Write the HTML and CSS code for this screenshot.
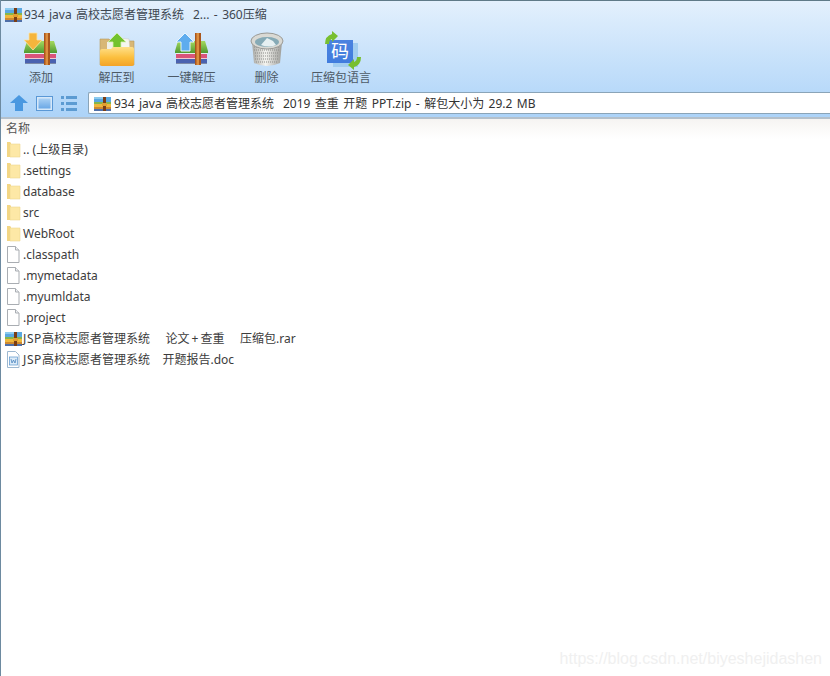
FILE: index.html
```html
<!DOCTYPE html>
<html lang="zh-CN">
<head>
  <meta charset="UTF-8" />
  <title>360压缩</title>
  <link rel="stylesheet" href="styles.css">
</head>
<body>
  <svg class="defs" width="0" height="0">
    <defs>
      <g id="rar">
        <rect x="1" y="2" width="17" height="5" fill="#5aa8e0"/>
        <rect x="1" y="2" width="9" height="2" fill="#8ccbef"/>
        <rect x="1" y="7" width="17" height="2" fill="#86b64c"/>
        <rect x="1" y="9" width="17" height="3" fill="#f0b83c"/>
        <rect x="1" y="12" width="17" height="2" fill="#cf8a30"/>
        <rect x="1" y="14" width="17" height="2" fill="#4f6fa8"/>
        <rect x="10" y="2" width="3" height="14" fill="#7a3d14"/>
        <rect x="9" y="8" width="5" height="3" fill="#e0a030"/>
      </g>
      <g id="folder">
        <path d="M0 1h3l1 1v14H0z" fill="#f3d684"/>
        <path d="M3 3h10v13H3z" fill="#fde8a6" stroke="#efd690" stroke-width=".6"/>
      </g>
      <g id="file">
        <path d="M.5.500h8l3.500 3.500v12.500H.5z" fill="#fff" stroke="#a9adb2"/>
        <path d="M8.500.5v3.500h3.500" fill="#eef0f2" stroke="#a9adb2"/>
      </g>
      <linearGradient id="lid" x1="0" y1="0" x2="0" y2="1">
        <stop offset="0" stop-color="#a6d95e"/>
        <stop offset="1" stop-color="#4f9a32"/>
      </linearGradient>
      <linearGradient id="fold" x1="0" y1="0" x2="0" y2="1">
        <stop offset="0" stop-color="#ffe08a"/>
        <stop offset=".55" stop-color="#fbbf3e"/>
        <stop offset="1" stop-color="#f3a328"/>
      </linearGradient>
      <linearGradient id="bin" x1="0" y1="0" x2="1" y2="0">
        <stop offset="0" stop-color="#a8a8a4"/>
        <stop offset=".45" stop-color="#f4f4f0"/>
        <stop offset="1" stop-color="#9c9c98"/>
      </linearGradient>
      <linearGradient id="square" x1="0" y1="0" x2="0" y2="1">
        <stop offset="0" stop-color="#a9d0f4"/>
        <stop offset="1" stop-color="#6ba8e6"/>
      </linearGradient>
      <g id="archive">
        <path d="M4 9h27l3 10v2H1v-2z" fill="url(#lid)"/>
        <rect x="2" y="21" width="31" height="1" fill="#e8eef0"/>
        <rect x="2" y="22" width="31" height="4" fill="#d9547a"/>
        <rect x="2" y="26" width="31" height="1" fill="#f0c8d0"/>
        <rect x="2" y="27" width="31" height="4" fill="#4a62b0"/>
        <rect x="2" y="31" width="31" height="1" fill="#7c8aa8"/>
        <path d="M21 1h6v32h-6z" fill="#a9561c"/>
        <path d="M22.500 1h2.500v32h-2.500z" fill="#dc8e3e"/>
      </g>
    </defs>
  </svg>

  <div class="window">
    <header class="top">
      <div class="titlebar">
        <svg width="18" height="17" viewBox="0 0 18 17"><use href="#rar"/></svg>
        <span class="spaced">934 java 高校志愿者管理系统  2... - 360压缩</span>
      </div>

      <div class="tools">
        <div class="tool tool-add">
          <svg width="36" height="36" viewBox="0 0 36 36">
            <use href="#archive"/>
            <path d="M6 1h8v7h5l-9 10L1 8h5z" fill="#f5b53c" stroke="#fbe3a6" stroke-width=".8"/>
          </svg>
          <span>添加</span>
        </div>
        <div class="tool tool-extract">
          <svg width="36" height="36" viewBox="0 0 36 36">
            <path d="M1 7h9l2 2h23v24H1z" fill="#d8b776" stroke="#b99a5c" stroke-width=".6"/>
            <path d="M18 6l12 1 1 12H18z" fill="#f6f6f0" stroke="#c8c8c0" stroke-width=".5"/>
            <path d="M8 10l10-1v9H8z" fill="#f0f0e8"/>
            <path d="M18 1l9 9h-5v8h-8v-8H9z" fill="#72c22e" stroke="#d8f0b4" stroke-width=".8"/>
            <path d="M1 19q0-2 2-2h9l2-2h19q2 0 2 2v15q0 2-2 2H3q-2 0-2-2z" fill="url(#fold)"/>
          </svg>
          <span>解压到</span>
        </div>
        <div class="tool tool-one">
          <svg width="36" height="36" viewBox="0 0 36 36">
            <use href="#archive"/>
            <path d="M11 1l9 9h-4v9H7v-9H2z" fill="#5eacee" stroke="#e6f4fe" stroke-width="1"/>
          </svg>
          <span>一键解压</span>
        </div>
        <div class="tool tool-del">
          <svg width="36" height="36" viewBox="0 0 36 36">
            <path d="M3 10l2 21q13 6 26 0l2-21z" fill="url(#bin)"/>
            <path d="M5 15h26M5 18h26M6 21h24M6 24h24M6 27h24M7 30h22" stroke="#8b8b88" stroke-width="1" stroke-dasharray="1 1"/>
            <ellipse cx="18" cy="9" rx="16" ry="8" fill="#d9d9d4" stroke="#9a9a96"/>
            <ellipse cx="18" cy="10" rx="12" ry="5" fill="#86aab6"/>
            <path d="M12 13l6-7 6 3 3 4q-7 3-15 0z" fill="#e6f0f2"/>
          </svg>
          <span>删除</span>
        </div>
        <div class="tool tool-lang">
          <svg width="36" height="36" viewBox="0 0 36 36">
            <rect x="10" y="11" width="25" height="24" fill="#a2cdf0"/>
            <rect x="4" y="8" width="26" height="23" fill="url(#square)"/>
            <rect x="4" y="8" width="26" height="23" fill="#3a74dc" fill-opacity=".85"/>
            <text x="17" y="26" class="ma">码</text>
            <path d="M2 12q0-8 7-10V-1l6 5-6 6V7q-3 1-3 5z" fill="#78bf30"/>
            <path d="M38 25q0 8-7 10v3l-6-5 6-6v3q3-1 3-5z" fill="#78bf30"/>
          </svg>
          <span>压缩包语言</span>
        </div>
      </div>

      <div class="navrow">
        <svg width="18" height="16" viewBox="0 0 18 16"><path d="M9 0l9 8h-5v8H5V8H0z" fill="#4a98e0"/></svg>
        <svg width="17" height="15" viewBox="0 0 17 15"><rect x=".5" y=".5" width="16" height="14" fill="#d6e8f9" stroke="#5a98d6"/><rect x="2.500" y="2.500" width="12" height="10" fill="url(#square)"/></svg>
        <svg width="16" height="15" viewBox="0 0 16 15"><path d="M0 0h3v3H0zM5 0h11v3H5zM0 6h3v3H0zM5 6h11v3H5zM0 12h3v3H0zM5 12h11v3H5z" fill="#5c9bd2"/></svg>
        <div class="pathbox">
          <svg width="18" height="17" viewBox="0 0 18 17"><use href="#rar"/></svg>
          <span class="spaced">934 java 高校志愿者管理系统  2019 查重 开题 PPT.zip - 解包大小为 29.2 MB</span>
        </div>
      </div>
    </header>

    <main class="listing">
      <div class="colhead">名称</div>
      <ul class="files">
        <li><svg width="18" height="17" viewBox="0 0 18 17"><use href="#folder" x="3"/></svg>.. (上级目录)</li>
        <li><svg width="18" height="17" viewBox="0 0 18 17"><use href="#folder" x="3"/></svg>.settings</li>
        <li><svg width="18" height="17" viewBox="0 0 18 17"><use href="#folder" x="3"/></svg>database</li>
        <li><svg width="18" height="17" viewBox="0 0 18 17"><use href="#folder" x="3"/></svg>src</li>
        <li><svg width="18" height="17" viewBox="0 0 18 17"><use href="#folder" x="3"/></svg>WebRoot</li>
        <li><svg width="18" height="17" viewBox="0 0 18 17"><use href="#file" x="3"/></svg>.classpath</li>
        <li><svg width="18" height="17" viewBox="0 0 18 17"><use href="#file" x="3"/></svg>.mymetadata</li>
        <li><svg width="18" height="17" viewBox="0 0 18 17"><use href="#file" x="3"/></svg>.myumldata</li>
        <li><svg width="18" height="17" viewBox="0 0 18 17"><use href="#file" x="3"/></svg>.project</li>
        <li><svg width="18" height="17" viewBox="0 0 18 17"><use href="#rar"/></svg><span><span class="latin">JSP</span>高校志愿者管理系统     论文<span class="plus">+</span>查重     压缩包.rar</span></li>
        <li><svg width="18" height="17" viewBox="0 0 18 17"><path d="M3.500.5h8l3.500 3.500v12.500H3.500z" fill="#fff" stroke="#9db8d0"/><rect x="5.500" y="6" width="8" height="8" fill="#dcebf8" stroke="#5a94cc" stroke-width=".7"/><path d="M7 8l1 4 1.500-3 1.500 3 1-4" fill="none" stroke="#3a78b8" stroke-width=".7"/></svg><span><span class="latin">JSP</span>高校志愿者管理系统    开题报告.doc</span></li>
      </ul>
      <div class="watermark">https://blog.csdn.net/biyeshejidashen</div>
    </main>
  </div>
</body>
</html>
```
FILE: styles.css
```css
* {
  box-sizing: border-box;
  margin: 0;
  padding: 0;
}
html, body {
  height: 100%;
}
body {
  font-family: "Noto Sans", "Noto Sans CJK SC", sans-serif;
  font-size: 12px;
  color: #444;
  background: #fff;
  overflow: hidden;
}
.defs {
  position: absolute;
}
.window {
  height: 676px;
  display: flex;
  flex-direction: column;
  border-left: 1px solid #6d8aa0;
}
.top {
  height: 119px;
  background: linear-gradient(to bottom, #e3f0fd, #acd3f8);
  border-top: 1px solid #5f7a88;
  border-bottom: 2px solid #b4c0cb;
}
.titlebar {
  height: 26px;
  padding-left: 3px;
  display: flex;
  align-items: center;
  gap: 2px;
  color: #3d4650;
}
.spaced {
  white-space: pre;
  word-spacing: 1.3px;
}
.tools {
  display: flex;
  height: 65px;
  padding-top: 5px;
}
.tool {
  display: flex;
  flex-direction: column;
  align-items: center;
  color: #4d5a66;
}
.tool svg {
  overflow: visible;
}
.tool-add { width: 80px; }
.tool-extract { width: 71px; }
.tool-one { width: 79px; }
.tool-del { width: 71px; }
.tool-lang { width: 78px; }
.ma {
  font-size: 18px;
  fill: #fff;
  text-anchor: middle;
  font-family: "Noto Sans CJK SC", sans-serif;
}
.navrow {
  display: flex;
  align-items: center;
  height: 22px;
  padding-left: 9px;
  gap: 8px;
}
.pathbox {
  flex: 1;
  margin-left: 3px;
  height: 22px;
  background: #fff;
  border: 1px solid #8aa4b8;
  border-right: none;
  border-radius: 2px 0 0 2px;
  display: flex;
  align-items: center;
  gap: 3px;
  padding-left: 4px;
  color: #333;
}
.listing {
  flex: 1;
  position: relative;
  background: #fff;
}
.colhead {
  height: 20px;
  padding-left: 5px;
  background: linear-gradient(to bottom, #f6f4f2, #fff);
  color: #555;
}
.files {
  list-style: none;
}
.files li {
  height: 21px;
  line-height: 21px;
  display: flex;
  align-items: center;
  padding-left: 3px;
  gap: 1px;
  white-space: pre;
  color: #3c3c3c;
}
.latin {
  letter-spacing: .6px;
}
.plus {
  margin: 0 2px;
}
.watermark {
  position: absolute;
  right: 8px;
  bottom: 8px;
  font-family: "Liberation Sans", sans-serif;
  font-size: 16px;
  color: #f0f0f0;
}
```
